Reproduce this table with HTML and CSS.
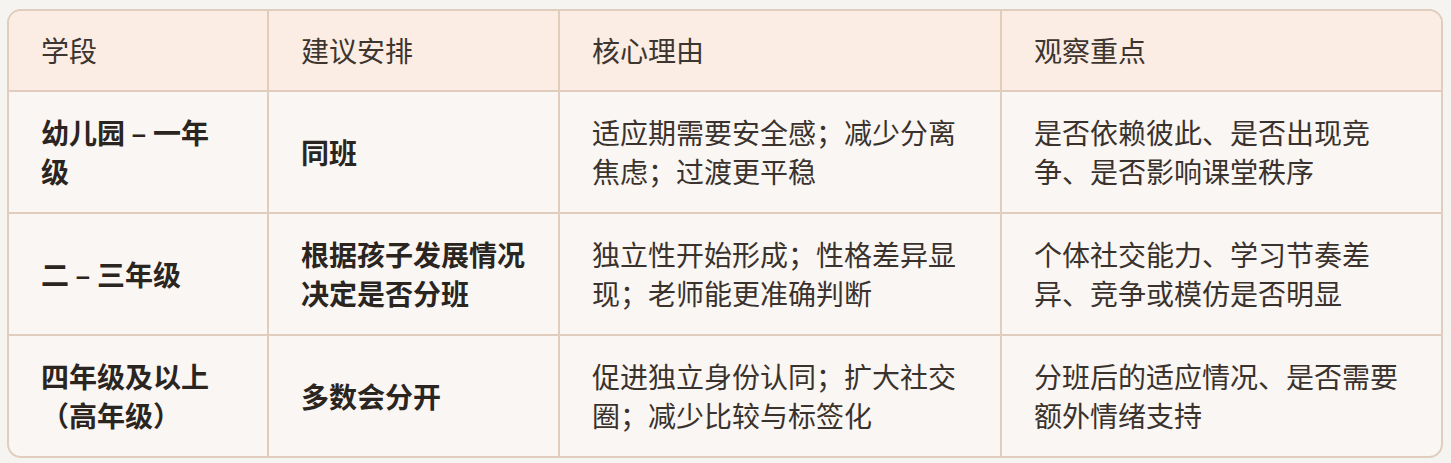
FILE: index.html
```html
<!DOCTYPE html>
<html lang="zh-CN">
<head>
<meta charset="utf-8">
<title>分班建议</title>
<link rel="stylesheet" href="styles.css">
</head>
<body>
<div class="card">
  <table class="grid">
    <colgroup>
      <col class="c1"><col class="c2"><col class="c3"><col class="c4">
    </colgroup>
    <thead>
      <tr>
        <th>学段</th>
        <th>建议安排</th>
        <th>核心理由</th>
        <th>观察重点</th>
      </tr>
    </thead>
    <tbody>
      <tr>
        <td class="strong">幼儿园 – 一年级</td>
        <td class="strong">同班</td>
        <td>适应期需要安全感；减少分离焦虑；过渡更平稳</td>
        <td>是否依赖彼此、是否出现竞争、是否影响课堂秩序</td>
      </tr>
      <tr>
        <td class="strong">二 – 三年级</td>
        <td class="strong">根据孩子发展情况决定是否分班</td>
        <td>独立性开始形成；性格差异显现；老师能更准确判断</td>
        <td>个体社交能力、学习节奏差异、竞争或模仿是否明显</td>
      </tr>
      <tr class="last">
        <td class="strong">四年级及以上（高年级）</td>
        <td class="strong">多数会分开</td>
        <td>促进独立身份认同；扩大社交圈；减少比较与标签化</td>
        <td>分班后的适应情况、是否需要额外情绪支持</td>
      </tr>
    </tbody>
  </table>
</div>
</body>
</html>
```

FILE: styles.css
```css
html, body {
  margin: 0;
  padding: 0;
  background: #f6f4f1;
}
body {
  padding: 9px 8px 8px 7px;
  font-family: "Noto Sans CJK SC", "Noto Sans", sans-serif;
  color: #3a322d;
}
.card {
  width: 1436px;
  box-sizing: border-box;
  border: 2px solid #e0cdbd;
  border-radius: 14px;
  overflow: hidden;
  background: #faf6f3;
}
.grid {
  width: 100%;
  border-collapse: separate;
  border-spacing: 0;
  table-layout: fixed;
  font-size: 28px;
  line-height: 39px;
}
.c1 { width: 260px; }
.c2 { width: 291px; }
.c3 { width: 442px; }
.c4 { width: auto; }
.grid th,
.grid td {
  text-align: left;
  vertical-align: middle;
  padding: 21px 32px;
  border-right: 2px solid #e0cdbd;
  border-bottom: 2px solid #e0cdbd;
}
.grid th:last-child,
.grid td:last-child {
  border-right: none;
}
.grid tr.last td {
  border-bottom: none;
}
.grid th {
  background: #fbede3;
  font-weight: 400;
  color: #3d3530;
  padding-top: 20px;
  padding-bottom: 20px;
}
.grid td.strong {
  font-weight: 700;
  color: #2b2521;
}
```
